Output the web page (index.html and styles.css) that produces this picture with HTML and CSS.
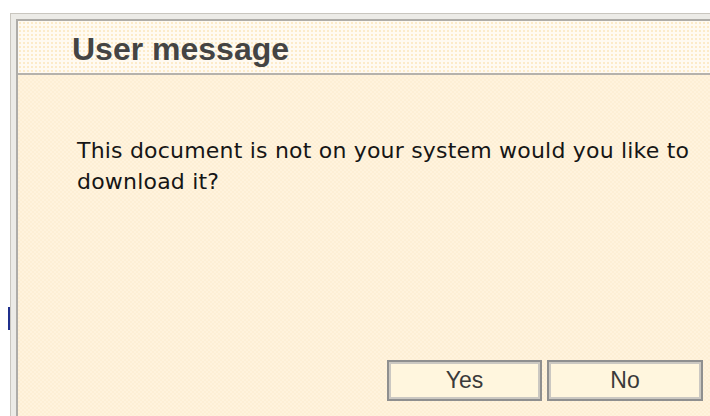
FILE: index.html
```html
<!DOCTYPE html>
<html lang="en">
<head>
<meta charset="utf-8">
<title>User message</title>
<link rel="stylesheet" href="styles.css">
</head>
<body>
<span class="edge-mark"></span>
<div class="dialog">
  <div class="dialog-inner">
    <div class="dialog-header">User message</div>
    <div class="dialog-body">
      <p class="message">This document is not on your system would you like to download it?</p>
      <div class="actions">
        <button class="btn" type="button">Yes</button>
        <button class="btn" type="button">No</button>
      </div>
    </div>
  </div>
</div>
</body>
</html>
```

FILE: styles.css
```css
html, body {
  margin: 0;
  padding: 0;
  background: #ffffff;
  overflow: hidden;
  width: 710px;
  height: 416px;
}

body {
  position: relative;
}

/* small sliver of a control peeking out behind the dialog */
.edge-mark {
  position: absolute;
  left: 8px;
  top: 307px;
  width: 2px;
  height: 23px;
  background: #1f2f8c;
}

.dialog {
  margin: 13px 0 0 10px;
  width: 700px;
  height: 403px;
  border-top: 1px solid #c9c6bf;
  border-left: 1px solid #c9c6bf;
  background: #ecebe7;
  padding: 5px 0 0 5px;
  box-sizing: border-box;
}

.dialog-inner {
  border-top: 2px solid #aeaca8;
  border-left: 2px solid #aeaca8;
  height: 100%;
  box-sizing: border-box;
  display: flex;
  flex-direction: column;
}

.dialog-header {
  height: 54px;
  box-sizing: border-box;
  padding: 3px 0 0 54px;
  line-height: 51px;
  font-family: "Liberation Sans", Arial, sans-serif;
  font-weight: bold;
  font-size: 32px;
  color: #444444;
  background-color: #fffaf1;
  background-image: radial-gradient(circle, #fcebc9 0 0.9px, transparent 1.3px);
  background-size: 4px 4px;
  border-bottom: 2px solid #b5b2ac;
}

.dialog-body {
  flex: 1;
  padding: 60px 0 0 59px;
  background-color: #fff3dd;
  background-image: repeating-conic-gradient(#fdefd5 0 25%, transparent 0 50%);
  background-size: 4px 4px;
}

.message {
  margin: 0;
  width: 630px;
  font-family: "DejaVu Sans", Tahoma, Verdana, sans-serif;
  font-size: 22px;
  letter-spacing: 0.2px;
  line-height: 31px;
  color: #161616;
}

.actions {
  display: flex;
  gap: 5px;
  margin-top: 163px;
  padding-left: 310px;
}

.btn {
  width: 155px;
  height: 41px;
  box-sizing: border-box;
  border: 2px solid #8f8f8f;
  box-shadow: inset 0 0 0 2px #cbc8c2;
  background: #fff6de;
  font-family: "Liberation Sans", Arial, sans-serif;
  font-size: 23px;
  color: #3a3a3a;
  padding: 0;
  cursor: pointer;
}

.btn + .btn {
  width: 156px;
}
```
